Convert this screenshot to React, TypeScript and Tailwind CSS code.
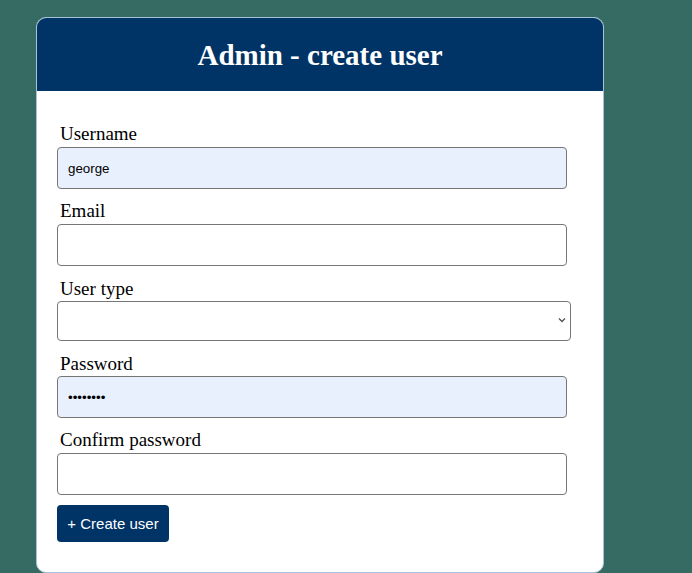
import React from "react";

export default function App() {
  const label = "block text-[19px] leading-[21px] pt-[1px] text-black";
  const serif = { fontFamily: '"Liberation Serif", "Times New Roman", serif' };
  const sans = { fontFamily: '"Liberation Sans", Arial, sans-serif' };
  const inputCls =
    "block w-[510px] h-[42px] rounded-[4px] border border-[#767676] px-[10px] text-[13.33px] text-black outline-none";
  return (
    <div className="min-h-[573px] bg-[#356b63] pt-[17px] pl-[36px]" style={serif}>
      <div className="w-[568px] h-[556px] rounded-[10px] border border-[#a9c1d6] bg-white overflow-hidden">
        <div className="h-[73px] bg-[#003366] flex items-center justify-center">
          <h1 className="text-[29px] font-bold text-white leading-none pt-[2px]">Admin - create user</h1>
        </div>
        <div className="pl-[20px] pt-[31px]">
          <label className={label + " pl-[3px] mb-[3px]"}>Username</label>
          <input className={inputCls + " bg-[#e8f0fe]"} style={sans} defaultValue="george" />
          <label className={label + " pl-[3px] mt-[10px] mb-[3px]"}>Email</label>
          <input className={inputCls + " bg-white"} style={sans} />
          <label className={label + " pl-[3px] mt-[11px] mb-[2px]"}>User type</label>
          <div className="relative w-[514px] h-[40px] rounded-[4px] border border-[#767676] bg-white">
            <svg
              className="absolute right-[4px] top-[15px]"
              width="8"
              height="6"
              viewBox="0 0 8 6"
              fill="none"
            >
              <path d="M1 1.5l3 3 3-3" stroke="#555" strokeWidth="1.4" />
            </svg>
          </div>
          <label className={label + " pl-[3px] mt-[11px] mb-[2px]"}>Password</label>
          <input
            type="password"
            className={inputCls + " bg-[#e8f0fe]"}
            style={sans}
            defaultValue="12345678"
          />
          <label className={label + " pl-[3px] mt-[10px] mb-[3px]"}>Confirm password</label>
          <input className={inputCls + " bg-white"} style={sans} />
          <button
            className="mt-[10px] h-[37px] w-[112px] rounded-[4px] bg-[#003366] text-white text-[15px] pt-[1px]"
            style={sans}
          >
            + Create user
          </button>
        </div>
      </div>
    </div>
  );
}
